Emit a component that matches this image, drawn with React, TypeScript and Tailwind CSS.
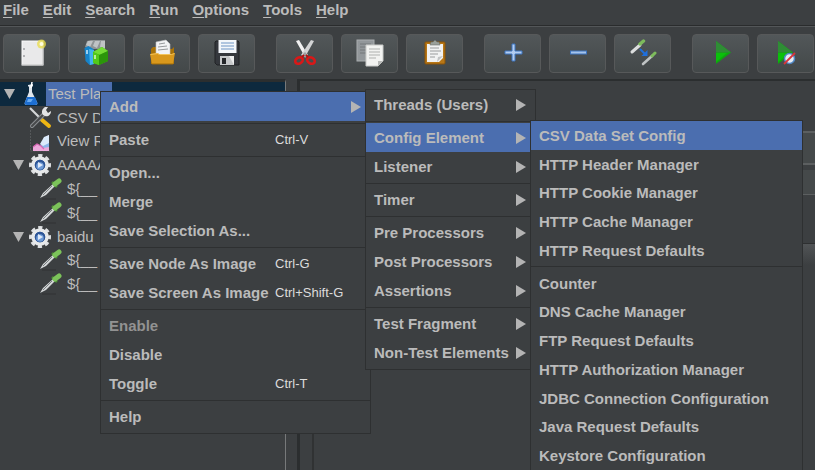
import type { ReactNode } from "react";

function Icon({ size = 28, children }: { size?: number; children: ReactNode }) {
  return (
    <svg width={size} height={size} viewBox={`0 0 ${size} ${size}`} fill="none" aria-hidden="true" className="shrink-0">
      {children}
    </svg>
  );
}

const newIcon = (
  <Icon>
    <rect x="4" y="2" width="21" height="24" fill="#e9e9ea" stroke="#fafafa" />
    <path d="M4 26h21V4" stroke="#b9babb" />
    <path d="M6 9v2M6 16v2" stroke="#8b8d8f" strokeWidth="1.2" />
    <circle cx="23.5" cy="5" r="4.5" fill="#e9dc48" opacity="0.75" />
    <circle cx="23.5" cy="5" r="2" fill="#fffde0" />
  </Icon>
);

const templatesIcon = (
  <Icon>
    <path d="M2 8l2-6 4-1h14v9H6z" fill="#8f9496" />
    <path d="M3 6l2-4h5l-3 6zM10 7l2-5h5l-3 7zM17 8l1-6h4v8z" fill="#bfc3c5" />
    <path d="M1.500 9l4-2 5 3v15l-4 1-4-4z" fill="#1683c9" />
    <path d="M6 10l5 1v14l-4 1z" fill="#42b3ee" />
    <path d="M4 11v4" stroke="#c9e9fb" strokeWidth="1.500" />
    <path d="M10 13l9-5 6 4v10l-9 4-6-2z" fill="#3fb80c" />
    <path d="M10 13l9-5 6 4-8 4z" fill="#73dc35" />
    <path d="M16 16l9-4v10l-9 4z" fill="#2b960a" />
    <path d="M10 13l6 3v10l-6-2z" fill="#53c91b" />
    <path d="M12 16v4" stroke="#d8f7c4" strokeWidth="1.500" />
  </Icon>
);

const openIcon = (
  <Icon>
    <path d="M3 25V10l2-2h8l1 2h10l2-2v17z" fill="#a87209" />
    <path d="M8 15V3l10-2 4 4v12z" fill="#f2f3f4" stroke="#bfc1c2" strokeWidth="0.6" />
    <path d="M11 5l6-1M10 8l9-1M10 11l10-1" stroke="#96999b" />
    <path d="M2 15l7-1 2 1h13l3-1-2 11H4z" fill="#d9981c" />
    <path d="M2.500 15.500l7-1 2 1h12l3-1" stroke="#f2c35a" />
    <path d="M4 25h21" stroke="#a06c08" />
  </Icon>
);

const saveIcon = (
  <Icon>
    <path d="M3 2h22l1 1v23H4l-2-2V3z" fill="#34373c" stroke="#202225" />
    <rect x="5.500" y="1" width="18" height="13" fill="#f3f6fa" />
    <path d="M8 4h13M8 7h13M8 10h13" stroke="#9ab5d6" strokeWidth="1.300" />
    <rect x="7" y="17" width="14" height="9" fill="#c6c8ca" />
    <path d="M16 17l5 9V17z" fill="#eceded" />
    <rect x="9" y="19" width="4" height="6" fill="#24262a" />
  </Icon>
);

const cutIcon = (
  <Icon>
    <path d="M5 2l3-1 9 15-3 2z" fill="#f1f1f1" />
    <path d="M23 2l-3-1-10 15 4 2z" fill="#d3d4d5" />
    <path d="M12 15l2-2 3 3-3 3z" fill="#9d9fa0" />
    <ellipse cx="8" cy="21.500" rx="4" ry="3" stroke="#d81818" strokeWidth="2.600" transform="rotate(-30 8 21.500)" />
    <ellipse cx="20" cy="21.500" rx="4" ry="3" stroke="#d81818" strokeWidth="2.600" transform="rotate(30 20 21.500)" />
    <path d="M11 18l2-2M17 18l-2-2" stroke="#b40f0f" strokeWidth="2" />
  </Icon>
);

const copyIcon = (
  <Icon>
    <rect x="1" y="1" width="17" height="21" fill="#92979a" stroke="#a9adaf" />
    <path d="M4 5h11M4 8h6M4 11h6M4 14h6" stroke="#74797b" />
    <path d="M10 6h17v16l-5 5H10z" fill="#f2f3f1" stroke="#c8cac8" />
    <path d="M13 10h11M13 13h11M13 16h11M13 19h7" stroke="#afb1af" />
    <path d="M22 27v-5h5z" fill="#b7b9b7" />
  </Icon>
);

const pasteIcon = (
  <Icon>
    <rect x="4" y="3" width="20" height="22" rx="1" fill="#b87716" stroke="#8a5508" />
    <path d="M6 5h16v14l-4 4H6z" fill="#f1f2f2" />
    <path d="M9 9h9M9 12h11M9 15h8M9 18h5" stroke="#9a9c9d" />
    <path d="M16 23l1-5 5-1z" fill="#c1c3c4" />
    <path d="M9 6l1-3h2l2-2 2 2h2l1 3z" fill="#9aa09a" stroke="#6c706c" strokeWidth="0.600" />
  </Icon>
);

const plusIcon = (
  <Icon>
    <path d="M13 5h3v7h7v3h-7v7h-3v-7H6v-3h7z" fill="#b3cdf0" stroke="#3c74c0" />
  </Icon>
);

const minusIcon = (
  <Icon>
    <rect x="6.500" y="12" width="16" height="3" fill="#a5c3ea" stroke="#3c74c0" />
  </Icon>
);

const toggleIcon = (
  <Icon>
    <path d="M3 13L11 6" stroke="#dcdede" strokeWidth="3" strokeLinecap="round" />
    <path d="M11 5l3.500-3" stroke="#7dbb5c" strokeWidth="3.400" strokeLinecap="round" />
    <path d="M14 25l9-8" stroke="#bfc3c4" strokeWidth="2.600" strokeLinecap="round" />
    <path d="M23 17l3-3" stroke="#7dbb5c" strokeWidth="3" strokeLinecap="round" />
    <path d="M11 10l5 5" stroke="#1f6fdc" strokeWidth="2" />
    <path d="M18.500 11v6h-6z" fill="#1f6fdc" />
  </Icon>
);

const playShape = (x: number) => (
  <>
    <path d={`M${x} 2L${x + 15} 13.500 ${x} 25z`} fill="#0fa40f" />
    <path d={`M${x} 2L${x + 15} 13.500H${x}z`} fill="#2f8d35" />
    <path d={`M${x} 14h11l-11 9z`} fill="#0bc00b" />
  </>
);

const startIcon = <Icon>{playShape(9)}</Icon>;

const startNoPausesIcon = (
  <Icon>
    {playShape(6)}
    <circle cx="17.500" cy="19.500" r="5" fill="#e6ecf4" stroke="#4e86c4" strokeWidth="1.500" />
    <path d="M12 25l11-11" stroke="#d8353b" strokeWidth="1.800" />
  </Icon>
);

const flaskIcon = (
  <Icon size={24}>
    <path d="M9 3l5-1v2l-1 1v5l5 10c1 2 0 3-2 3H8c-2 0-3-1-2-3l4-10V5L9 4z" fill="#dfe6ec" />
    <path d="M13 0l-1 6" stroke="#fff" strokeWidth="1.500" />
    <path d="M8 15h8l2 5c1 2 0 3-2 3H8c-2 0-3-1-2-3z" fill="#1d6fd2" />
    <path d="M9 17h5l-2 3H8z" fill="#67abf2" />
  </Icon>
);

const toolsIcon = (
  <Icon size={24}>
    <path d="M2 2l11 11" stroke="#d4d6d7" strokeWidth="2.200" />
    <path d="M14 14l7 6" stroke="#eeb613" strokeWidth="4" strokeLinecap="round" />
    <path d="M4 20L17 7" stroke="#8b8f92" strokeWidth="4" strokeLinecap="round" />
    <path d="M4 20L17 7" stroke="#47494b" strokeWidth="2" strokeLinecap="round" />
    <path d="M15 9c-2-3-1-6 2-8h3l-2 3 2 3 3-2c0 4-3 6-6 5z" fill="#e3e4e5" />
  </Icon>
);

const chartIcon = (
  <Icon size={24}>
    <path d="M2.500 1v21H22" stroke="#55585a" strokeDasharray="2 1" />
    <path d="M5 22v-4l4-3 4 2 3-8 5-3v16z" fill="#eda9dc" />
    <path d="M12 15l4-7 5-2v10l-5 2z" fill="#dcebfb" />
    <path d="M12 15l3 2 6-3v4l-6 1z" fill="#8db6ea" />
    <path d="M5 18l4-3 4 2 3 3" stroke="#d867b4" strokeWidth="1.200" />
  </Icon>
);

const gearIcon = (
  <Icon size={24}>
    <circle cx="12" cy="12" r="9" stroke="#dfe1e3" strokeWidth="4" strokeDasharray="4 3.070" strokeDashoffset="2" />
    <circle cx="12" cy="12" r="7" fill="#2b5192" stroke="#e7e9ea" strokeWidth="3.500" />
    <circle cx="12" cy="12" r="5.200" fill="#2d5596" />
    <circle cx="12" cy="13" r="3.800" fill="#6f9bd6" />
    <path d="M10 9l5 3-5 3z" fill="#dfeafa" />
  </Icon>
);

const pipetteIcon = (
  <Icon size={24}>
    <path d="M4 22h14" stroke="#303334" />
    <path d="M2 21l3-5L15 7l2 2-9 9z" fill="#d3d6d7" />
    <path d="M5 18L14 9" stroke="#7b8082" strokeWidth="1" />
    <path d="M14 5l5 5" stroke="#4b8a35" strokeWidth="2.500" />
    <path d="M17 7l4-3" stroke="#7cc35a" strokeWidth="5" strokeLinecap="round" />
  </Icon>
);

const menuBar = ["File", "Edit", "Search", "Run", "Options", "Tools", "Help"];

const toolGroups: { name: string; icon: ReactNode }[][] = [
  [
    { name: "New", icon: newIcon },
    { name: "Templates", icon: templatesIcon },
    { name: "Open", icon: openIcon },
    { name: "Save", icon: saveIcon },
  ],
  [
    { name: "Cut", icon: cutIcon },
    { name: "Copy", icon: copyIcon },
    { name: "Paste", icon: pasteIcon },
  ],
  [
    { name: "Expand all", icon: plusIcon },
    { name: "Collapse all", icon: minusIcon },
    { name: "Toggle", icon: toggleIcon },
  ],
  [
    { name: "Start", icon: startIcon },
    { name: "Start no pauses", icon: startNoPausesIcon },
  ],
];

type Node = { label: string; icon: ReactNode; indent: string; open?: boolean; selected?: boolean };

const nodes: Node[] = [
  { label: "Test Plan", icon: flaskIcon, indent: "pl-1", open: true, selected: true },
  { label: "CSV D", icon: toolsIcon, indent: "pl-7" },
  { label: "View R", icon: chartIcon, indent: "pl-7" },
  { label: "AAAAA", icon: gearIcon, indent: "pl-[13px]", open: true },
  { label: "${__", icon: pipetteIcon, indent: "pl-[38px]" },
  { label: "${__", icon: pipetteIcon, indent: "pl-[38px]" },
  { label: "baidu", icon: gearIcon, indent: "pl-[13px]", open: true },
  { label: "${__", icon: pipetteIcon, indent: "pl-[38px]" },
  { label: "${__", icon: pipetteIcon, indent: "pl-[38px]" },
];

type Entry = { label: string; keys?: string; sub?: boolean; active?: boolean; disabled?: boolean } | "separator";

const editMenu: Entry[] = [
  { label: "Add", sub: true, active: true },
  "separator",
  { label: "Paste", keys: "Ctrl-V" },
  "separator",
  { label: "Open..." },
  { label: "Merge" },
  { label: "Save Selection As..." },
  "separator",
  { label: "Save Node As Image", keys: "Ctrl-G" },
  { label: "Save Screen As Image", keys: "Ctrl+Shift-G" },
  "separator",
  { label: "Enable", disabled: true },
  { label: "Disable" },
  { label: "Toggle", keys: "Ctrl-T" },
  "separator",
  { label: "Help" },
];

const addMenu: Entry[] = [
  { label: "Threads (Users)", sub: true },
  "separator",
  { label: "Config Element", sub: true, active: true },
  { label: "Listener", sub: true },
  "separator",
  { label: "Timer", sub: true },
  "separator",
  { label: "Pre Processors", sub: true },
  { label: "Post Processors", sub: true },
  { label: "Assertions", sub: true },
  "separator",
  { label: "Test Fragment", sub: true },
  { label: "Non-Test Elements", sub: true },
];

const configMenu: Entry[] = [
  { label: "CSV Data Set Config", active: true },
  { label: "HTTP Header Manager" },
  { label: "HTTP Cookie Manager" },
  { label: "HTTP Cache Manager" },
  { label: "HTTP Request Defaults" },
  "separator",
  { label: "Counter" },
  { label: "DNS Cache Manager" },
  { label: "FTP Request Defaults" },
  { label: "HTTP Authorization Manager" },
  { label: "JDBC Connection Configuration" },
  { label: "Java Request Defaults" },
  { label: "Keystore Configuration" },
];

function Menu({ label, entries, place }: { label: string; entries: Entry[]; place: string }) {
  return (
    <div role="menu" aria-label={label} className={`absolute flex flex-col border border-[#2e3031] bg-[#3c3f41] ${place}`}>
      {entries.map((e, i) =>
        e === "separator" ? (
          <div key={i} role="separator" className="flex h-1 shrink-0 items-center">
            <div className="h-px w-full bg-[#2e3031]" />
          </div>
        ) : (
          <button
            key={i}
            type="button"
            role="menuitem"
            disabled={e.disabled}
            className={`flex h-[29px] min-h-0 items-center pl-2 pr-[9px] text-left font-bold whitespace-nowrap ${
              e.active ? "bg-[#4b6eaf]" : ""
            } ${e.disabled ? "text-[#929292]" : "text-[#bbbbbb]"}`}
          >
            <span className="flex-1 leading-[27px]">{e.label}</span>
            {e.keys && <kbd className="w-[86px] font-[Liberation_Sans] text-[13px] font-normal text-[#dcdcdc]">{e.keys}</kbd>}
            {e.sub && (
              <svg width="10" height="12" viewBox="0 0 10 12" aria-hidden="true">
                <path d="M0 0l10 6-10 6z" fill="#b4b4b4" />
              </svg>
            )}
          </button>
        ),
      )}
    </div>
  );
}

export default function App() {
  return (
    <div className="relative flex h-screen flex-col overflow-hidden bg-[#3c3f41] font-['Liberation_Sans',Arial,sans-serif] text-[15px] leading-5 text-[#bbbbbb]">
      <nav className="flex h-[26px] shrink-0 gap-3.5 border-b border-[#2a2c2d] pl-[3px] font-bold">
        {menuBar.map((m) => (
          <button key={m} type="button" className="h-5">
            <span className="underline underline-offset-2">{m[0]}</span>
            {m.slice(1)}
          </button>
        ))}
      </nav>

      <div role="toolbar" aria-label="Main" className="flex h-[53px] shrink-0 items-center gap-[21px] border-t border-[#535658] pl-[3px]">
        {toolGroups.map((group, i) => (
          <div key={i} className="flex gap-2">
            {group.map((t) => (
              <button
                key={t.name}
                type="button"
                aria-label={t.name}
                className="flex h-[39px] w-[57px] items-center justify-center rounded border border-[#57595a] bg-linear-to-b from-[#525759] to-[#434849]"
              >
                {t.icon}
              </button>
            ))}
          </div>
        ))}
      </div>

      <main className="flex min-h-0 flex-1">
        <div className="w-[286px] shrink-0 border-t-[3px] border-r border-t-[#2b2e2f] border-r-[#77797a]">
          <ul role="tree" aria-label="Test plan" className="flex h-[214px] flex-col">
            {nodes.map((n, i) => (
              <li
                key={i}
                role="treeitem"
                aria-selected={!!n.selected}
                className={`flex min-h-0 flex-1 items-center ${n.indent} ${n.selected ? "bg-[#0d293e]" : ""}`}
              >
                {n.open && (
                  <svg width="11" height="10" viewBox="0 0 11 10" className="mr-1 shrink-0" aria-hidden="true">
                    <path d="M0 0h11L5.500 10z" fill="#b4b4b4" />
                  </svg>
                )}
                {n.icon}
                <span className={`ml-[3px] px-0.5 leading-6 ${n.selected ? "bg-[#4b6eaf]" : ""}`}>{n.label}</span>
              </li>
            ))}
          </ul>
        </div>
        <div className="w-[11px] shrink-0" />
        <section className="flex-1 border-t-2 border-l-[3px] border-[#2b2e2f]">
          <div className="h-[50px]" />
          <div className="ml-3 h-[34px] border-y-2 border-[#5c5f60] bg-[#45494a]" />
          <div className="mt-[5px] ml-3 h-[25px] border-b border-[#5c5f60] bg-[#45494a]" />
          <div className="mt-12 ml-3 h-[22px] border-t border-[#2e3031] bg-linear-to-b from-[#515456] to-[#3c3f41]" />
          <div className="ml-3 h-screen border-l-2 border-[#303233]" />
        </section>
      </main>

      <Menu label="Edit" entries={editMenu} place="top-[91px] left-[100px] w-[271px] pb-0.5" />
      <Menu label="Add" entries={addMenu} place="top-[89px] left-[365px] w-[171px] pb-0.5" />
      <Menu label="Config Element" entries={configMenu} place="top-[120px] bottom-0 left-[530px] w-[273px] border-b-0" />
    </div>
  );
}
